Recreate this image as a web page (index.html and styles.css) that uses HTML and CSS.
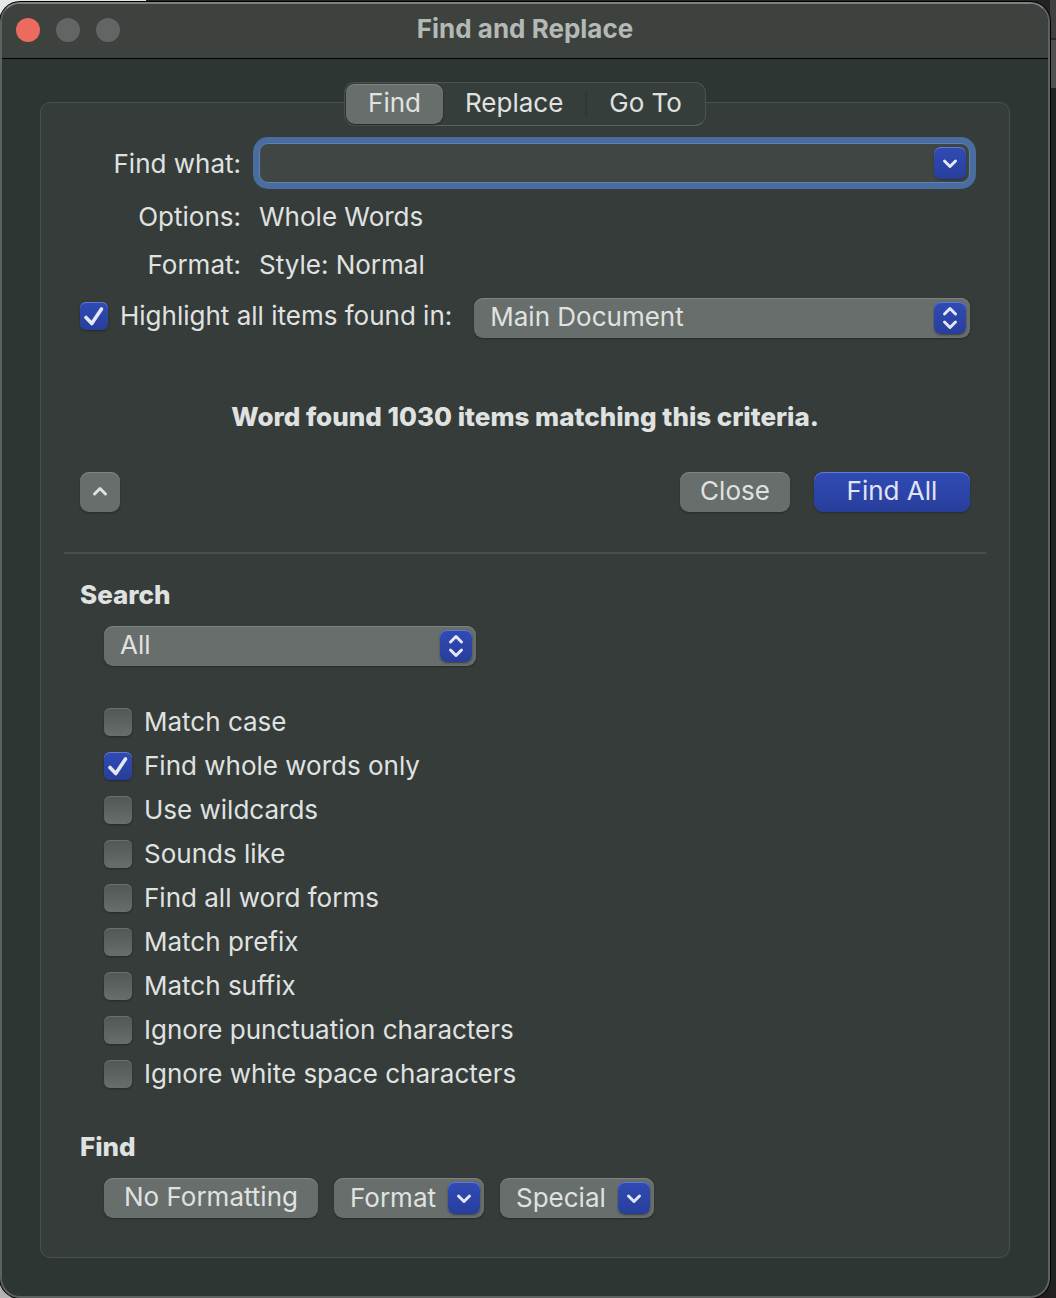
FILE: index.html
```html
<!DOCTYPE html>
<html lang="en">
<head>
<meta charset="utf-8">
<title>Find and Replace</title>
<link rel="stylesheet" href="styles.css">
</head>
<body>
<svg class="sprite" aria-hidden="true">
  <symbol id="check" viewBox="0 0 28 28"><path d="M6 15.500l5.800 6L21.500 7" fill="none" stroke="currentColor" stroke-width="3.600" stroke-linecap="round" stroke-linejoin="round"/></symbol>
  <symbol id="down" viewBox="0 0 32 32"><path d="M10.500 14l5.500 5.500L21.500 14" fill="none" stroke="currentColor" stroke-width="3" stroke-linecap="round" stroke-linejoin="round"/></symbol>
  <symbol id="up" viewBox="0 0 32 32"><path d="M10.500 18l5.500-5.500L21.500 18" fill="none" stroke="currentColor" stroke-width="3" stroke-linecap="round" stroke-linejoin="round"/></symbol>
  <symbol id="updown" viewBox="0 0 32 32"><path d="M10.500 12l5.500-5.500L21.500 12M10.500 20l5.500 5.500L21.500 20" fill="none" stroke="currentColor" stroke-width="3" stroke-linecap="round" stroke-linejoin="round"/></symbol>
</svg>
<div class="window">
  <header class="titlebar">
    <div class="lights">
      <button class="light light-close" type="button" aria-label="Close window"></button>
      <button class="light" type="button" aria-label="Minimize window"></button>
      <button class="light" type="button" aria-label="Zoom window"></button>
    </div>
    <h1 class="title">Find and Replace</h1>
  </header>
  <main class="content">
    <form class="panel">
      <div class="tabs" role="tablist">
        <button class="tab tab-active" type="button" role="tab" aria-selected="true">Find</button>
        <button class="tab" type="button" role="tab" aria-selected="false">Replace</button>
        <span class="tab-divider"></span>
        <button class="tab" type="button" role="tab" aria-selected="false">Go To</button>
      </div>
      <div class="fields">
        <label class="field-label" for="find-what">Find what:</label>
        <div class="combo">
          <input class="combo-input" id="find-what" type="text">
          <button class="chip" type="button" aria-label="Recent searches"><svg class="icon"><use href="#down"/></svg></button>
        </div>
        <span class="field-label">Options:</span>
        <span>Whole Words</span>
        <span class="field-label">Format:</span>
        <span>Style: Normal</span>
      </div>
      <div class="highlight">
        <label class="option option-scope"><span class="tick"><input class="box" type="checkbox" checked><svg class="tick-mark"><use href="#check"/></svg></span>Highlight all items found in:</label>
        <div class="popup popup-wide">
          <select class="popup-select" aria-label="Highlight scope"><option>Main Document</option></select>
          <span class="chip"><svg class="icon"><use href="#updown"/></svg></span>
        </div>
      </div>
      <p class="message">Word found 1030 items matching this criteria.</p>
      <div class="actions">
        <button class="button button-square" type="button" aria-label="Show fewer options"><svg class="icon"><use href="#up"/></svg></button>
        <button class="button button-close" type="button">Close</button>
        <button class="button button-primary" type="submit">Find All</button>
      </div>
      <hr class="rule">
      <h2 class="heading">Search</h2>
      <div class="popup popup-search">
        <select class="popup-select" aria-label="Search direction"><option>All</option></select>
        <span class="chip"><svg class="icon"><use href="#updown"/></svg></span>
      </div>
      <div class="options">
        <label class="option"><span class="tick"><input class="box" type="checkbox"><svg class="tick-mark"><use href="#check"/></svg></span>Match case</label>
        <label class="option"><span class="tick"><input class="box" type="checkbox" checked><svg class="tick-mark"><use href="#check"/></svg></span>Find whole words only</label>
        <label class="option"><span class="tick"><input class="box" type="checkbox"><svg class="tick-mark"><use href="#check"/></svg></span>Use wildcards</label>
        <label class="option"><span class="tick"><input class="box" type="checkbox"><svg class="tick-mark"><use href="#check"/></svg></span>Sounds like</label>
        <label class="option"><span class="tick"><input class="box" type="checkbox"><svg class="tick-mark"><use href="#check"/></svg></span>Find all word forms</label>
        <label class="option"><span class="tick"><input class="box" type="checkbox"><svg class="tick-mark"><use href="#check"/></svg></span>Match prefix</label>
        <label class="option"><span class="tick"><input class="box" type="checkbox"><svg class="tick-mark"><use href="#check"/></svg></span>Match suffix</label>
        <label class="option"><span class="tick"><input class="box" type="checkbox"><svg class="tick-mark"><use href="#check"/></svg></span>Ignore punctuation characters</label>
        <label class="option"><span class="tick"><input class="box" type="checkbox"><svg class="tick-mark"><use href="#check"/></svg></span>Ignore white space characters</label>
      </div>
      <h2 class="heading">Find</h2>
      <div class="find-buttons">
        <button class="button button-plain" type="button">No Formatting</button>
        <button class="button button-menu" type="button">Format<span class="chip"><svg class="icon"><use href="#down"/></svg></span></button>
        <button class="button button-menu" type="button">Special<span class="chip"><svg class="icon"><use href="#down"/></svg></span></button>
      </div>
    </form>
  </main>
</div>
</body>
</html>
```
FILE: styles.css
```css
* { box-sizing: border-box; }

html {
  min-height: 100%;
  background:
    linear-gradient(#414141, #414141 38px, #2b2b2b 38px, #2b2b2b 40px, #505050 40px, #505050 88px, #222 88px) right / 6px 100% no-repeat,
    linear-gradient(90deg, #e6e8e7 146px, #222 146px) top / 100% 30px no-repeat,
    linear-gradient(90deg, #b5b3b5 30px, #241c20 30px);
}

body {
  margin: 0;
  padding: 2px 6px 0 0;
  color: #e0e2e1;
  font: 26px/32px Inter, "Liberation Sans", sans-serif;
}

button, input, select { color: inherit; font: inherit; }
button { padding: 0; border: 0; }

.sprite { display: none; }

.window {
  overflow: hidden;
  border: 2px solid #5b625f;
  border-top-color: #7d8280;
  border-radius: 20px;
  background: #2e3633;
  box-shadow: 0 0 0 1px #000;
}

.titlebar {
  display: grid;
  grid-template-columns: 1fr auto 1fr;
  align-items: center;
  height: 55px;
  padding: 0 14px 2px;
  border-bottom: 1px solid #000;
  background: #3d423f;
}

.lights { display: flex; gap: 16px; }
.light { width: 24px; height: 24px; border-radius: 50%; background: #616664; }
.light-close { background: #ed6a5e; }
.title { margin: 0 0 2px; color: #b4b9b6; font-size: 26px; font-weight: 700; }

.content { padding: 43px 38px 38px; }

.panel {
  display: flex;
  flex-direction: column;
  padding: 0 39px 39px;
  border: 1px solid #48504d;
  border-radius: 10px;
  background: #353c39;
}

.tabs {
  display: flex;
  align-items: center;
  align-self: center;
  height: 44px;
  margin-top: -21px;
  padding: 1px;
  border: 1px solid #4b524f;
  border-bottom-color: #5a615e;
  border-radius: 11px;
  background: #363e3b;
}

.tab { height: 40px; padding: 0 22px 2px; border-radius: 9px; background: none; }
.tab-active {
  background: #686e6b;
  box-shadow: inset 0 1px #7e8381, 0 1px 2px #222;
}
.tab-divider { width: 2px; height: 24px; background: #303735; }

.fields {
  display: grid;
  grid-template-columns: 161px 1fr;
  column-gap: 18px;
  row-gap: 16px;
  align-items: center;
  margin-top: 17px;
}
.field-label { text-align: right; }

.combo {
  display: flex;
  align-items: center;
  height: 40px;
  margin-bottom: 2px;
  padding: 0 3px;
  border: 1px solid #5a82bb;
  border-radius: 9px;
  background: #3f4643;
  box-shadow: 0 0 0 6px #4a6c9f;
}
.combo-input { flex: 1; min-width: 0; padding: 0 10px; border: 0; outline: 0; background: none; }

.chip {
  display: grid;
  width: 32px;
  height: 32px;
  border-radius: 7px;
  color: #e4e7f5;
  background: linear-gradient(#304bb5, #283e9b);
  box-shadow: inset 0 1px #637acb, 0 1px 2px #2229;
}
.icon { width: 32px; height: 32px; }

.highlight { display: flex; align-items: center; gap: 22px; margin-top: 17px; }
.option { display: flex; align-items: center; gap: 12px; }
.option-scope { padding-bottom: 4px; }
.tick { display: grid; color: #e4e7f5; }
.box, .tick-mark { grid-area: 1 / 1; width: 28px; height: 28px; margin: 0; }
.box {
  appearance: none;
  border-radius: 6px;
  background: linear-gradient(#515755, #686e6b);
  box-shadow: inset 0 1px #6a706d, 0 1px 2px #222b;
}
.box:checked {
  background: linear-gradient(#304bb5, #283e9b);
  box-shadow: inset 0 1px #637acb, 0 1px 2px #222b;
}
.tick-mark { visibility: hidden; pointer-events: none; }
.box:checked + .tick-mark { visibility: visible; }

.popup { display: grid; align-items: center; }
.popup-wide { flex: 1; }
.popup-search { width: 372px; margin: 15px 0 0 24px; }
.popup-select, .popup .chip { grid-area: 1 / 1; }
.popup .chip { justify-self: end; margin-right: 4px; pointer-events: none; }
.popup-select {
  appearance: none;
  width: 100%;
  height: 40px;
  padding: 0 48px 2px 16px;
  border: 0;
  border-radius: 9px;
  background: #686e6b;
  box-shadow: inset 0 1px #7e8381, 0 1px 2px #2229;
}

.message { margin: 63px 0 39px; font-weight: 800; text-align: center; }

.actions { display: flex; gap: 24px; }
.button {
  height: 40px;
  padding-bottom: 2px;
  border-radius: 9px;
  background: #686e6b;
  box-shadow: inset 0 1px #7e8381, 0 1px 2px #2229;
}
.button-square { display: grid; place-items: center; width: 40px; margin-right: auto; padding: 0; }
.button-close { width: 110px; }
.button-primary {
  width: 156px;
  color: #e0e4f5;
  background: linear-gradient(#304bb5, #283e9b);
  box-shadow: inset 0 1px #637acb, 0 1px 2px #2229;
}

.rule { align-self: stretch; height: 2px; margin: 40px -16px 0; border: 0; background: #48504d; }
.heading { margin: 25px 0 0; font-size: 26px; font-weight: 800; }
.options { display: grid; gap: 12px; margin: 40px 0 16px 24px; }

.find-buttons { display: flex; gap: 16px; margin: 15px 0 0 24px; }
.button-plain { width: 214px; }
.button-menu { display: flex; align-items: center; gap: 12px; padding: 0 4px 0 16px; }
```
